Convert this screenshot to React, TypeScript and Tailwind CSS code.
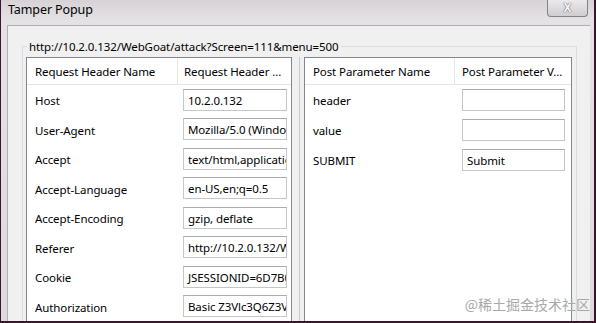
const HEADERS: [string, string][] = [
  ["Host", "10.2.0.132"],
  ["User-Agent", "Mozilla/5.0 (Windows NT 6.1; rv:17.0)"],
  ["Accept", "text/html,application/xhtml+xml"],
  ["Accept-Language", "en-US,en;q=0.5"],
  ["Accept-Encoding", "gzip, deflate"],
  ["Referer", "http://10.2.0.132/WebGoat/attack"],
  ["Cookie", "JSESSIONID=6D7B0F1A2C"],
  ["Authorization", "Basic Z3Vlc3Q6Z3Vlc3Q="],
];

const PARAMS: [string, string][] = [
  ["header", ""],
  ["value", ""],
  ["SUBMIT", "Submit"],
];

function Row({ name, value, nameW, inputW }: { name: string; value: string; nameW: string; inputW: string }) {
  return (
    <div className="flex h-[30px] items-center">
      <div className={`${nameW} shrink-0 truncate pl-[8px] pt-[2px]`}>{name}</div>
      <div
        className={`${inputW} h-[22px] shrink-0 overflow-hidden whitespace-nowrap border border-[#c3c6cb] border-t-[#a9adb3] bg-white pl-[4px] pt-[1px] leading-[20px]`}
      >
        {value}
      </div>
    </div>
  );
}

export default function App() {
  return (
    <div
      className="h-[323px] w-[596px] overflow-hidden bg-[#3b1528] pb-[2px] pl-[1px] pr-[2px] text-[11.5px] tracking-[-0.1px] text-[#000]"
      style={{ fontFamily: '"Noto Sans", "Open Sans", sans-serif' }}
    >
      <div className="flex h-full flex-col bg-[linear-gradient(180deg,#d8d2d6_0px,#e4e2e4_20px,#dcdadc_100%)]">
        {/* title bar */}
        <div className="relative flex h-[25px] shrink-0 items-start pl-[7px] pt-[1px]">
          <span className="text-[12.5px] leading-[17px]">Tamper Popup</span>
          <div className="absolute right-[6px] top-0 flex h-[17px] w-[41px] items-center justify-center rounded-b-[4px] border border-t-0 border-[#858285] bg-[linear-gradient(180deg,#ebe9eb,#cfcdcf)]">
            <span className="text-[12px] font-bold leading-none text-[#f6f6f6] [text-shadow:0_0_1px_#555,0_0_1px_#555]">X</span>
          </div>
        </div>

        {/* client area */}
        <div className="ml-[6px] mr-[4px] flex min-h-0 flex-1 flex-col border-l border-t border-[#b0b0b0] bg-[#f0f0f0]">
          <fieldset className="ml-[14px] mr-[13px] mt-[12px] flex min-h-0 flex-1 flex-col border border-b-0 border-[#dcdcdc] px-[3px]">
            <legend className="ml-[1px] px-[2px] leading-[17px]">
              http://10.2.0.132/WebGoat/attack?Screen=111&amp;menu=500
            </legend>
            <div className="mt-[2px] flex min-h-0 flex-1">
              {/* left panel */}
              <div className="flex w-[266px] shrink-0 flex-col border border-b-0 border-[#828790] bg-white">
                <div className="flex h-[27px] shrink-0 items-center border-b border-[#e5e5e5]">
                  <div className="w-[151px] shrink-0 border-r border-[#e5e5e5] pl-[8px] pt-[2px] leading-[24px]">Request Header Name</div>
                  <div className="pl-[6px] pt-[2px]">Request Header ...</div>
                </div>
                {HEADERS.map(([n, v]) => (
                  <Row key={n} name={n} value={v} nameW="w-[156px]" inputW="w-[104px]" />
                ))}
              </div>

              {/* splitter */}
              <div className="flex w-[12px] shrink-0 justify-center">
                <div className="ml-[2px] w-[1px] bg-[#c8c8c8]" />
              </div>

              {/* right panel */}
              <div className="flex w-[268px] shrink-0 flex-col border border-b-0 border-[#828790] bg-white">
                <div className="flex h-[27px] shrink-0 items-center border-b border-[#e5e5e5]">
                  <div className="w-[150px] shrink-0 border-r border-[#e5e5e5] pl-[8px] pt-[2px] leading-[24px]">Post Parameter Name</div>
                  <div className="pl-[7px] pt-[2px]">Post Parameter V...</div>
                </div>
                {PARAMS.map(([n, v]) => (
                  <Row key={n} name={n} value={v} nameW="w-[157px]" inputW="w-[103px]" />
                ))}
                <div className="flex flex-1 items-end justify-end pb-[10px]">
                  <span
                    className="translate-x-[19px] text-[14px] leading-none tracking-normal text-[#a8a8a8]"
                    style={{ fontFamily: '"Noto Sans CJK SC", sans-serif' }}
                  >
                    @稀土掘金技术社区
                  </span>
                </div>
              </div>
            </div>
          </fieldset>
        </div>
      </div>
    </div>
  );
}
